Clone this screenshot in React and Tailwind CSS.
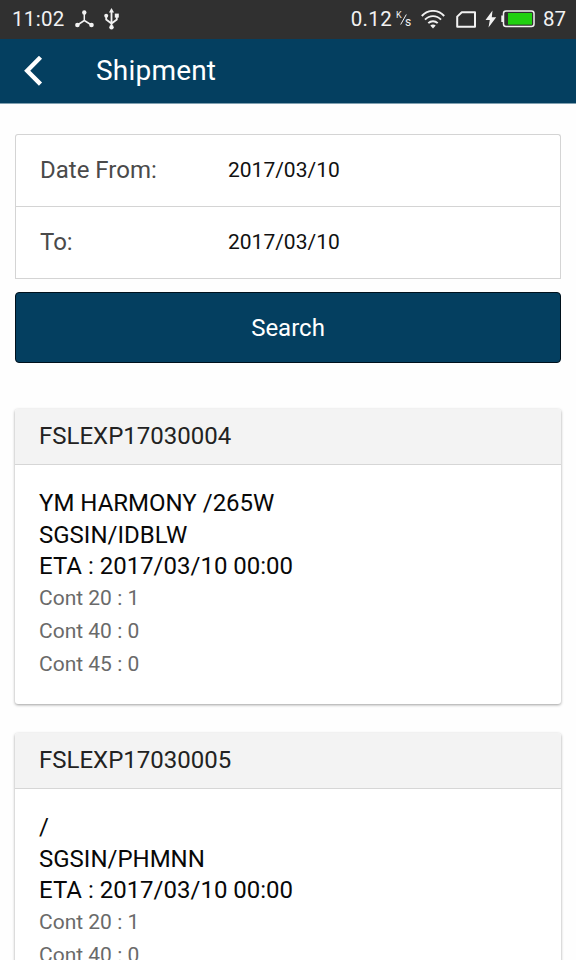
import React from 'react';

const shipments = [
  {
    id: 'FSLEXP17030004',
    vessel: 'YM HARMONY /265W',
    route: 'SGSIN/IDBLW',
    eta: '2017/03/10 00:00',
    containers: [['Cont 20', 1], ['Cont 40', 0], ['Cont 45', 0]],
  },
  {
    id: 'FSLEXP17030005',
    vessel: '/',
    route: 'SGSIN/PHMNN',
    eta: '2017/03/10 00:00',
    containers: [['Cont 20', 1], ['Cont 40', 0]],
  },
];

const StatusBar = () => (
  <div className="flex h-[39px] shrink-0 items-center justify-between bg-[#303030] pl-[12px] pr-[10px] text-[20.5px] text-[#f2f2f2]">
    <div className="flex items-center">
      <span className="w-[63px] tracking-[0.3px]">11:02</span>
      {/* Network share */}
      <svg className="-mt-px" width="19" height="18" viewBox="0 0 19 18" fill="#f2f2f2">
        <path d="M9.3 2.5V10.5L2.5 15M9.3 10.5L16.5 15" fill="none" stroke="#f2f2f2" strokeWidth="1.5" />
        <circle cx="9.3" cy="2.5" r="2.2" />
        <circle cx="2.4" cy="15" r="2.3" />
        <circle cx="16.5" cy="15" r="2.3" />
      </svg>
      {/* USB */}
      <svg className="-mt-px ml-[10px]" width="16" height="22" viewBox="0 0 16 22" fill="#f2f2f2">
        <path d="M7.5 3V19M2.2 8V11.5L7.5 15.5L12.8 11.5V7" fill="none" stroke="#f2f2f2" strokeWidth="1.8" />
        <path d="M7.5 0L10 4.5H5Z" />
        <circle cx="2.2" cy="7.8" r="2" />
        <rect x="10.8" y="5.6" width="4" height="4" />
        <circle cx="7.5" cy="19.2" r="2.2" />
      </svg>
    </div>
    <div className="flex items-center">
      <span className="tracking-[0.3px]">0.12</span>
      {/* Kilobytes per second */}
      <span className="relative ml-[4px] h-[18px] w-[16px] text-[9px] leading-none">
        <span className="absolute left-0 top-0">K</span>
        <svg className="absolute left-[4px] top-[3px]" width="7" height="11" viewBox="0 0 7 11">
          <path d="M0.7 10.5L6.3 0.5" stroke="#f2f2f2" strokeWidth="1" />
        </svg>
        <span className="absolute left-[9px] top-[5px] text-[12px]">s</span>
      </span>
      <svg className="-mt-px ml-[9px]" width="24" height="19" viewBox="0 0 24 19" fill="none" stroke="#f2f2f2" strokeWidth="1.9">
        <path d="M0.8 6C7 -0.8 17 -0.8 23.2 6" />
        <path d="M4 9.7C8.5 4.9 15.5 4.9 20 9.7" />
        <path d="M7.3 13.2C10 10.5 14 10.5 16.7 13.2" />
        <path d="M9.3 15.4C10.8 14.1 13.2 14.1 14.7 15.4L12 18.6Z" fill="#f2f2f2" stroke="none" />
      </svg>
      {/* SIM */}
      <svg className="-mt-px ml-[11px]" width="21" height="17" viewBox="0 0 21 17">
        <path d="M5.8 1.2H19V15.8H1.2V5.6Z" fill="none" stroke="#f2f2f2" strokeWidth="2" strokeLinejoin="round" />
      </svg>
      <svg className="-mt-px ml-[8px]" width="12" height="18" viewBox="0 0 12 18">
        <path d="M7.5 0.5L0.5 10H4.8L3.5 17.5L11.2 7.3H6.8Z" fill="#f2f2f2" />
      </svg>
      <svg className="-mt-px ml-[4px]" width="34" height="18" viewBox="0 0 34 18">
        <rect x="2.5" y="1" width="30.5" height="15.6" rx="2.5" fill="none" stroke="#f2f2f2" strokeWidth="1.5" />
        <rect x="0.3" y="5.5" width="1.8" height="6.5" fill="#f2f2f2" />
        <rect x="7" y="3" width="24" height="11.6" fill="#20d010" />
      </svg>
      <span className="ml-[8px]">87</span>
    </div>
  </div>
);

const Header = () => (
  <header className="flex h-[65px] shrink-0 items-center border-b border-[#80a0b0] bg-[#043f60] pl-[23px] text-white">
    <svg className="-mt-px" width="20" height="30" viewBox="0 0 20 30" fill="none">
      <path d="M17.5 1.3L4.2 14.7L17.5 28.1" stroke="#fff" strokeWidth="4.4" />
    </svg>
    <h1 className="ml-[53px] text-[28px] leading-[34px] tracking-[0.2px]">Shipment</h1>
  </header>
);

const DateRow = ({ label, value }) => (
  <div className="flex h-[72px] items-center border-b border-[#d4d4d4] pl-[24px]">
    <span className="w-[188px] pb-px text-[24px] leading-[32px] text-[#4a4a4a]">{label}</span>
    <span className="pb-px text-[21px] leading-[32px] text-[#111]">{value}</span>
  </div>
);

const ShipmentCard = ({ shipment }) => (
  <section className="h-[295px] shrink-0 overflow-hidden rounded-[3px] bg-white shadow-[0_1px_3px_rgba(0,0,0,0.38)]">
    <h2 className="flex h-[56px] items-center border-b border-[#d6d6d6] bg-[#f3f3f3] pl-[24px] text-[24px] leading-[32px] text-[#222]">
      <span className="-mt-px">{shipment.id}</span>
    </h2>
    <div className="pl-[24px] pt-[23px]">
      <div className="text-[24px] leading-[31.5px] text-[#080808]">
        <p>{shipment.vessel}</p>
        <p>{shipment.route}</p>
        <p>ETA : {shipment.eta}</p>
      </div>
      <div className="-mt-px text-[21px] leading-[33px] text-[#6a6a6a]">
        {shipment.containers.map(([label, count]) => (
          <p key={label}>{label} : {count}</p>
        ))}
      </div>
    </div>
  </section>
);

const App = () => {
  return (
    <div className="flex h-[960px] w-[576px] flex-col overflow-hidden bg-[#fefefe] font-['Roboto',sans-serif]">
      <StatusBar />
      <Header />
      <main className="flex flex-col px-[15px] pt-[30px]">
        <div className="rounded-t-[3px] border border-b-0 border-[#d4d4d4] bg-white">
          <DateRow label="Date From:" value="2017/03/10" />
          <DateRow label="To:" value="2017/03/10" />
        </div>
        <button className="mt-[13px] h-[71px] rounded-[4px] border border-[#00111c] bg-[#043f60] text-[24px] leading-[32px] text-white">
          Search
        </button>
        <div className="mt-[46px] flex flex-col gap-[29px]">
          {shipments.map((shipment) => (
            <ShipmentCard key={shipment.id} shipment={shipment} />
          ))}
        </div>
      </main>
    </div>
  );
};

export default App;
